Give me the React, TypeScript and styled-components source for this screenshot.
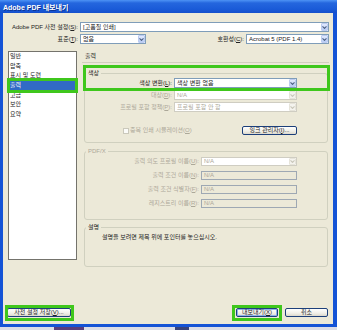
import styled, { createGlobalStyle, css } from 'styled-components';

const GlobalStyle = createGlobalStyle`
  * { box-sizing: border-box; }
  html, body { margin: 0; padding: 0; background: #ece9d8; }
  body {
    width: 337px;
    height: 330px;
    overflow: hidden;
    font-family: 'Liberation Sans', 'Noto Sans CJK KR', sans-serif;
    font-size: 6px;
    color: #222;
  }
`;

// green annotation frame drawn over a part of the dialog
const marked = css<{ $mark?: string }>`
  ${({ $mark }) =>
    $mark &&
    css`
      position: relative;
      &::after {
        content: '';
        position: absolute;
        inset: ${$mark};
        border: 3px solid #3fc71c;
        pointer-events: none;
      }
    `}
`;

const Chevron = ({ disabled }: { disabled?: boolean }) => (
  <svg width="5" height="3" viewBox="0 0 5 3">
    <path d="M0.5 0.4 L2.5 2.4 L4.5 0.4" fill="none" stroke={disabled ? '#c9c7ba' : '#4d6185'} strokeWidth="1.1" />
  </svg>
);

const Combo = ({ value, width, disabled }: { value: string; width: number; disabled?: boolean }) => (
  <ComboBox $width={width} $disabled={disabled}>
    <ComboValue>{value}</ComboValue>
    <ComboButton $disabled={disabled}>
      <Chevron disabled={disabled} />
    </ComboButton>
  </ComboBox>
);

const App = () => {
  const sections = ['일반', '압축', '표시 및 도련', '출력', '고급', '보안', '요약'];

  return (
    <>
      <GlobalStyle />
      <Window>
        <TitleBar>Adobe PDF 내보내기</TitleBar>
        <Body>
          <TopForm>
            <FormRow>
              <FieldLabel $width={75}>
                Adobe PDF 사전 설정(<u>S</u>):
              </FieldLabel>
              <Combo value="[고품질 인쇄]" width={249} />
            </FormRow>
            <FormRow>
              <FieldLabel $width={75}>
                표준(<u>T</u>):
              </FieldLabel>
              <Combo value="없음" width={66} />
              <FieldLabel>
                호환성(<u>C</u>):
              </FieldLabel>
              <Combo value="Acrobat 5 (PDF 1.4)" width={83} />
            </FormRow>
          </TopForm>

          <Main>
            <SectionList>
              {sections.map((name) => (
                <SectionItem
                  key={name}
                  $selected={name === '출력'}
                  $mark={name === '출력' ? '-3px -2px -2px -2px' : undefined}
                >
                  {name}
                </SectionItem>
              ))}
            </SectionList>

            <Panel>
              <PanelHeader>출력</PanelHeader>

              <Group $top={7} $pad="1px 30px 7px 0" $mark="-12px -3px 51px -2px">
                <GroupTitle>색상</GroupTitle>
                <Stack $gap={2}>
                  <FieldRow $height={10}>
                    <FieldLabel $width={87}>
                      색상 변환(<u>L</u>):
                    </FieldLabel>
                    <Combo value="색상 변환 없음" width={123} />
                  </FieldRow>
                  <FieldRow $height={10}>
                    <FieldLabel $width={87} $disabled>
                      대상(<u>D</u>):
                    </FieldLabel>
                    <Combo value="N/A" width={123} disabled />
                  </FieldRow>
                  <FieldRow $height={10}>
                    <FieldLabel $width={87} $disabled>
                      프로필 포함 정책(<u>P</u>):
                    </FieldLabel>
                    <Combo value="프로필 포함 안 함" width={123} disabled />
                  </FieldRow>
                  <CheckRow>
                    <CheckBox />
                    <CheckText>
                      중복 인쇄 시뮬레이션(<u>O</u>)
                    </CheckText>
                    <Button $width={55}>
                      잉크 관리자(<u>I</u>)...
                    </Button>
                  </CheckRow>
                </Stack>
              </Group>

              <Group $top={5} $pad="2px 30px 11px 0">
                <GroupTitle $disabled>PDF/X</GroupTitle>
                <Stack $gap={5}>
                  <FieldRow $height={9}>
                    <FieldLabel $width={114} $disabled>
                      출력 의도 프로필 이름(<u>U</u>):
                    </FieldLabel>
                    <Combo value="N/A" width={96} disabled />
                  </FieldRow>
                  <FieldRow $height={9}>
                    <FieldLabel $width={114} $disabled>
                      출력 조건 이름(<u>N</u>):
                    </FieldLabel>
                    <TextBox $width={96}>N/A</TextBox>
                  </FieldRow>
                  <FieldRow $height={9}>
                    <FieldLabel $width={114} $disabled>
                      출력 조건 식별자(<u>F</u>):
                    </FieldLabel>
                    <TextBox $width={96}>N/A</TextBox>
                  </FieldRow>
                  <FieldRow $height={9}>
                    <FieldLabel $width={114} $disabled>
                      레지스트리 이름(<u>R</u>):
                    </FieldLabel>
                    <TextBox $width={96}>N/A</TextBox>
                  </FieldRow>
                </Stack>
              </Group>

              <Group $top={4} $pad="3px 0 25px 0">
                <GroupTitle>설명</GroupTitle>
                <Description>설명을 보려면 제목 위에 포인터를 놓으십시오.</Description>
              </Group>
            </Panel>
          </Main>

          <ButtonBar>
            <Button $width={64} $mark="-4px -4px -5px -3px">
              사전 설정 저장(<u>V</u>)...
            </Button>
            <ButtonGroup>
              <Button $width={42} $default $mark="-4px -5px -5px -5px">
                내보내기(<u>X</u>)
              </Button>
              <Button $width={43}>취소</Button>
            </ButtonGroup>
          </ButtonBar>
        </Body>
        <Taskbar />
      </Window>
    </>
  );
};

export default App;

const Window = styled.div`
  width: 337px;
  height: 330px;
  display: flex;
  flex-direction: column;
  background: #1453d6;
`;

const TitleBar = styled.div`
  flex: none;
  height: 13px;
  display: flex;
  align-items: center;
  padding-left: 3px;
  background: linear-gradient(#4d93f5 0, #2466de 3px, #1a5bd8 9px, #1550cc 13px);
  color: #fff;
  font-size: 7px;
  font-weight: 700;
  white-space: nowrap;
  text-shadow: 1px 1px 0 #0c3290;
`;

const Body = styled.div`
  flex: 1;
  display: flex;
  flex-direction: column;
  margin: 0 4px 3px 3px;
  padding: 9px 0 7px;
  background: #ece9d8;
`;

const Taskbar = styled.div`
  flex: none;
  height: 3px;
  background: linear-gradient(
    90deg,
    #dcdde6 0 16%,
    #5a3d7a 16% 25%,
    #dcdde6 25% 52%,
    #39437a 52% 56%,
    #dcdde6 56% 100%
  );
`;

const TopForm = styled.div`
  display: flex;
  flex-direction: column;
  gap: 2px;
`;

const FormRow = styled.div`
  display: flex;
  align-items: center;
  gap: 2px;
  height: 10px;
  padding-right: 4px;
`;

const FieldLabel = styled.label<{ $width?: number; $disabled?: boolean }>`
  ${({ $width }) => ($width ? `width: ${$width}px; flex: none;` : 'flex: 1;')}
  text-align: right;
  white-space: nowrap;
  line-height: 7px;
  color: ${({ $disabled }) => ($disabled ? '#aca899' : '#222')};
`;

const ComboBox = styled.div<{ $width: number; $disabled?: boolean }>`
  flex: none;
  width: ${({ $width }) => $width}px;
  height: 100%;
  display: flex;
  align-items: center;
  background: #fff;
  border: 1px solid ${({ $disabled }) => ($disabled ? '#cfcdc2' : '#7f9db9')};
  color: ${({ $disabled }) => ($disabled ? '#aca899' : '#222')};
`;

const ComboValue = styled.span`
  flex: 1;
  padding-left: 2px;
  line-height: 7px;
  white-space: nowrap;
  overflow: hidden;
`;

const ComboButton = styled.span<{ $disabled?: boolean }>`
  flex: none;
  width: 7px;
  align-self: stretch;
  display: flex;
  align-items: center;
  justify-content: center;
  border-radius: 1px;
  background: ${({ $disabled }) =>
    $disabled ? '#f4f3ee' : 'linear-gradient(#e2eafe, #b9cdf6)'};
  border: 1px solid ${({ $disabled }) => ($disabled ? '#e6e4da' : '#bccbf0')};
`;

const TextBox = styled.div<{ $width: number }>`
  flex: none;
  width: ${({ $width }) => $width}px;
  height: 100%;
  display: flex;
  align-items: center;
  padding-left: 2px;
  background: #ece9d8;
  border: 1px solid #9ea8b3;
  color: #aca899;
  line-height: 7px;
`;

const Main = styled.div`
  display: flex;
  align-items: flex-start;
  gap: 5px;
  margin-top: 7px;
  padding-left: 5px;
`;

const SectionList = styled.ul`
  flex: none;
  width: 69px;
  height: 209px;
  margin: 0;
  padding: 0;
  list-style: none;
  background: #fff;
  border: 1px solid #74736c;
`;

const SectionItem = styled.li<{ $selected?: boolean; $mark?: string }>`
  height: 9.7px;
  line-height: 9.7px;
  padding-left: 1px;
  white-space: nowrap;
  background: ${({ $selected }) => ($selected ? '#316ac5' : 'transparent')};
  color: ${({ $selected }) => ($selected ? '#fff' : '#222')};
  ${marked}
`;

const Panel = styled.div`
  flex: none;
  width: 247px;
  display: flex;
  flex-direction: column;
`;

const PanelHeader = styled.div`
  height: 12px;
  padding-left: 3px;
  line-height: 11px;
  border-bottom: 1px solid #d2cfbf;
`;

const Group = styled.fieldset<{ $top: number; $pad: string; $mark?: string }>`
  min-width: 0;
  margin: ${({ $top }) => $top}px 1px 0 2px;
  padding: ${({ $pad }) => $pad};
  border: 1px solid #d0d0bf;
  border-radius: 3px;
  ${marked}
`;

const GroupTitle = styled.legend<{ $disabled?: boolean }>`
  margin-left: 1px;
  padding: 0 2px;
  height: 7px;
  line-height: 7px;
  color: ${({ $disabled }) => ($disabled ? '#aca899' : '#222')};
`;

const Stack = styled.div<{ $gap: number }>`
  display: flex;
  flex-direction: column;
  gap: ${({ $gap }) => $gap}px;
`;

const FieldRow = styled.div<{ $height: number }>`
  display: flex;
  align-items: center;
  gap: 2px;
  height: ${({ $height }) => $height}px;
`;

const CheckRow = styled.div`
  display: flex;
  align-items: center;
  height: 9px;
  margin-top: 12px;
  padding-left: 38px;
`;

const CheckBox = styled.span`
  flex: none;
  width: 6px;
  height: 6px;
  margin-right: 1px;
  background: #fbfbf8;
  border: 1px solid #cac8bb;
`;

const CheckText = styled.span`
  color: #aca899;
  line-height: 7px;
  white-space: nowrap;
`;

const Button = styled.button<{ $width: number; $default?: boolean; $mark?: string }>`
  flex: none;
  width: ${({ $width }) => $width}px;
  height: 9px;
  margin-left: auto;
  padding: 0;
  font: inherit;
  line-height: 7px;
  color: #222;
  white-space: nowrap;
  background: linear-gradient(#ffffff, #f0efe8 60%, #dcd8cc);
  border: 1px solid #1c3f7a;
  border-radius: 2px;
  box-shadow: ${({ $default }) => ($default ? 'inset 0 0 0 1px #8fb1ec' : 'none')};
  ${marked}
`;

const Description = styled.div`
  padding-left: 17px;
  line-height: 7px;
  white-space: nowrap;
`;

const ButtonBar = styled.div`
  display: flex;
  align-items: center;
  height: 9px;
  margin-top: auto;
  padding: 0 5px 0 4px;

  > ${Button}:first-child {
    margin-left: 0;
  }
`;

const ButtonGroup = styled.div`
  display: flex;
  gap: 7px;
  margin-left: auto;
`;
